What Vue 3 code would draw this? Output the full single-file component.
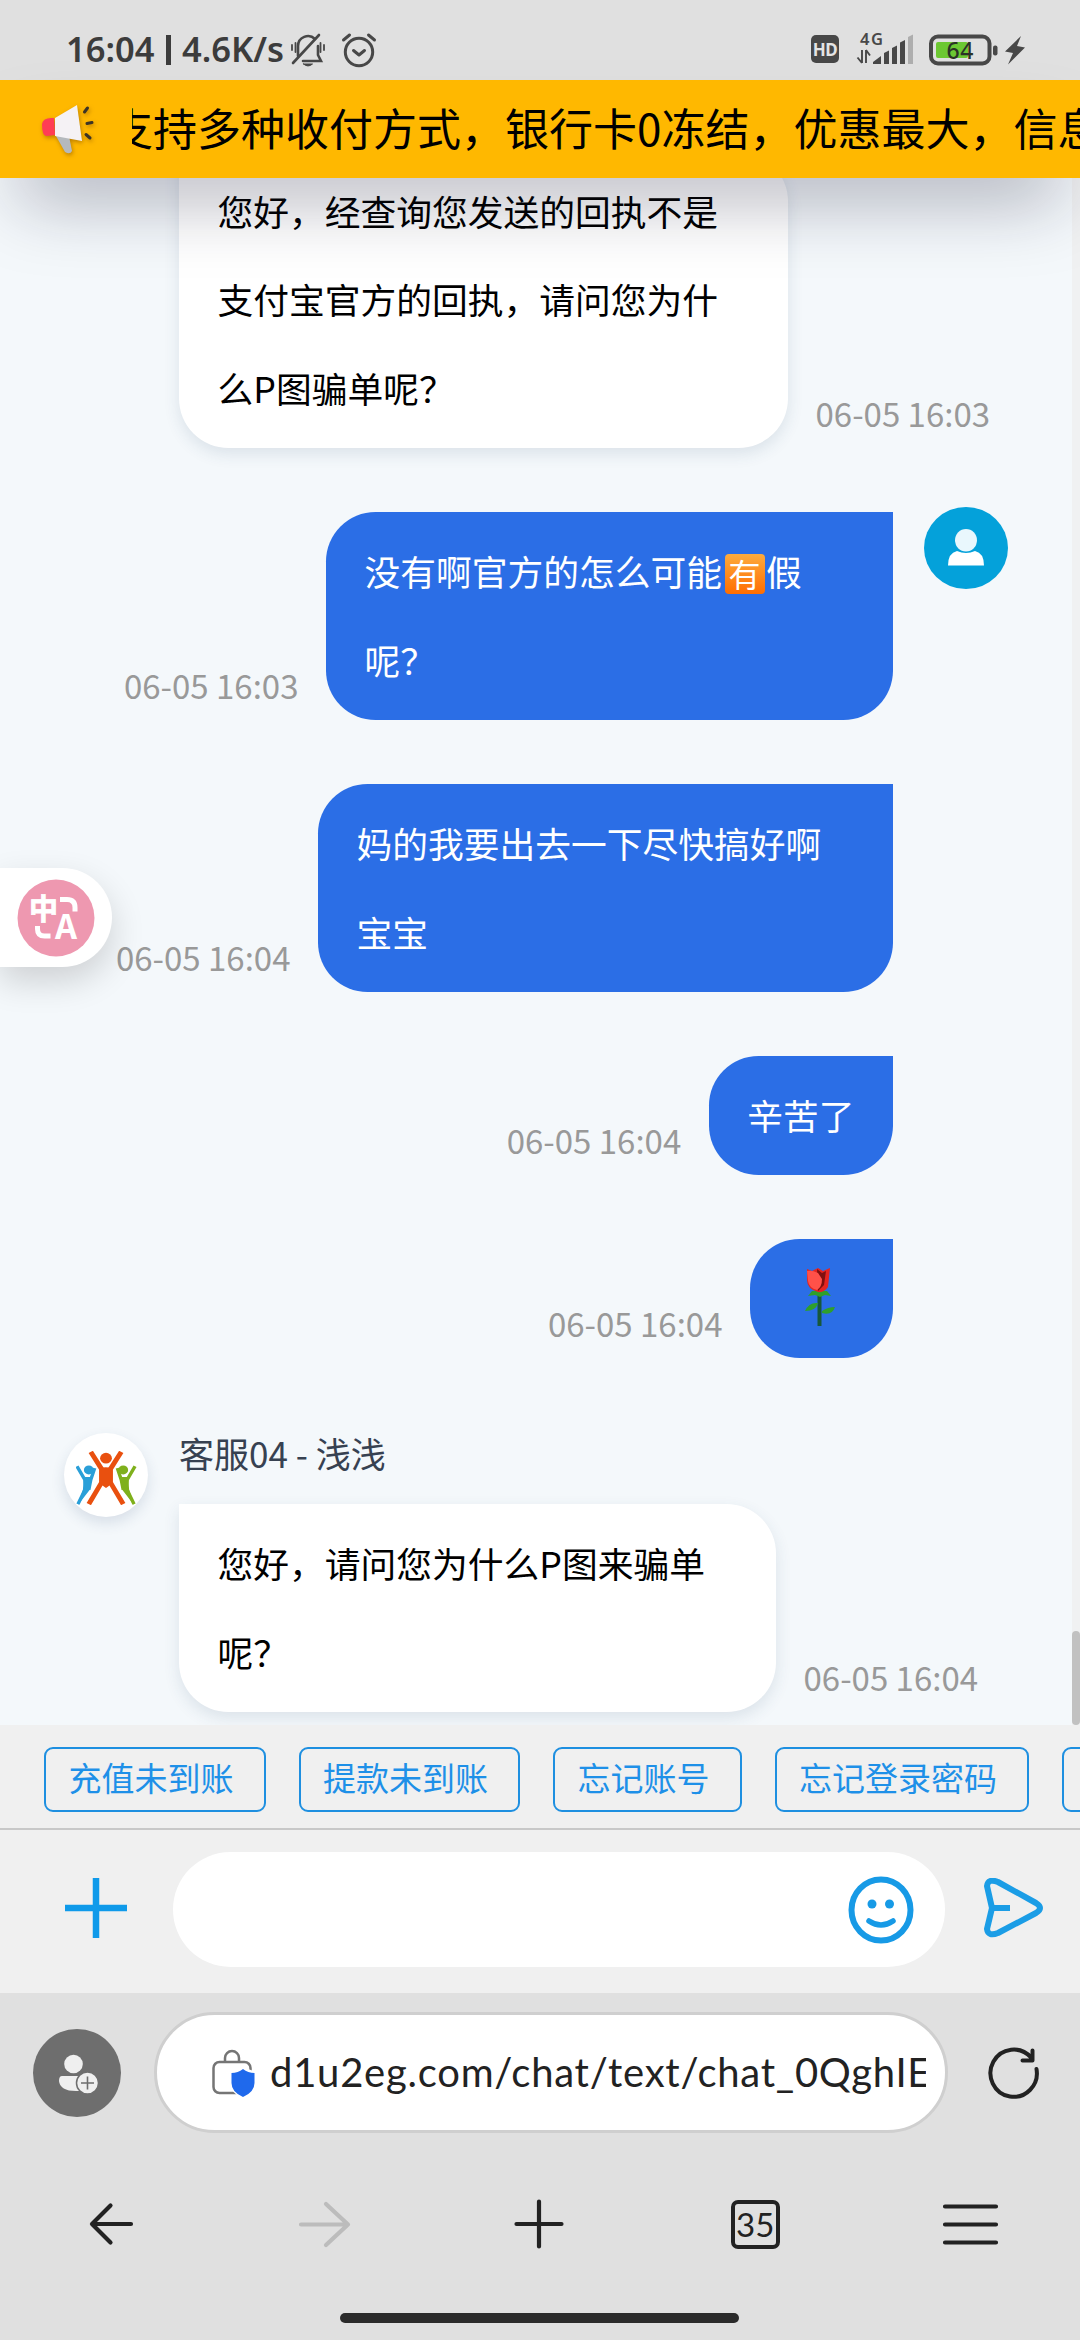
<script setup>
const quickReplies = ['充值未到账', '提款未到账', '忘记账号', '忘记登录密码', '忘记提款密码']
</script>

<template>
  <div class="screen">
    <header class="status">
      <span class="clock">16:04</span>
      <span class="bar"></span>
      <span class="speed">4.6K/s</span>
      <svg class="bell" width="36" height="36" viewBox="0 0 36 36" fill="none" stroke="#484848" stroke-width="2.6" stroke-linecap="round">
        <path d="M8 24V14a10 10 0 0 1 17-7M28 14v9l3 6H13" />
        <path d="M3 31L29 3" />
        <path d="M2 13v5M5.500 11v9M30.500 11v9M34 13v5" stroke-width="1.800" />
        <path d="M13.500 32h9q-4.500 4-9 0z" fill="#484848" stroke-width="1" />
      </svg>
      <svg class="alarm" width="36" height="36" viewBox="0 0 36 36" fill="none" stroke="#484848" stroke-width="3" stroke-linecap="round" stroke-linejoin="round">
        <circle cx="18" cy="20" r="13.700" />
        <path d="M12.500 18.500l5.500 4.500 5.500-4.500M2.500 8l6-5M33.500 8l-6-5" />
      </svg>
      <span class="hd">HD</span>
      <svg class="signal" width="58" height="34" viewBox="0 0 58 34">
        <text x="4" y="13.500" font-size="16.500" font-weight="600" fill="#484848" textLength="23">4G</text>
        <path d="M6 19v13M1.500 26.500L6 32M10 32V19M14 24.500L10 19" stroke="#484848" stroke-width="1.900" fill="none" />
        <path d="M17 31l8-6v8h-8zM28 22l5-2.500V33h-5zM36 17l5-2.500V33h-5zM44 11.500l5-2.500V33h-5z" fill="#484848" />
        <path d="M52 6l5-2.500V33h-5z" fill="#aeaeae" />
      </svg>
      <svg class="battery" width="70" height="32" viewBox="0 0 70 32">
        <rect x="2" y="2.500" width="58.500" height="27" rx="7" fill="none" stroke="#484848" stroke-width="4" />
        <rect x="7" y="8" width="32" height="16" rx="2" fill="#6cc832" />
        <rect x="64" y="11.500" width="4.500" height="10" rx="2" fill="#484848" />
        <text x="17.500" y="25" font-size="23" font-weight="500" fill="#2b3326" textLength="27">64</text>
      </svg>
      <svg class="bolt" width="20" height="30" viewBox="0 0 20 30"><path d="M16 1L0 16.500l8 1.500-5 11.500L20 12.500l-8-1.500z" fill="#484848" /></svg>
    </header>

    <div class="notice">
      <svg class="horn" width="54" height="50" viewBox="0 0 54 50">
        <path d="M15 32l9 16q5 3 7-1l-3-15z" fill="#b5b9bd" />
        <path d="M36 1l5 36-27-5V14z" fill="#f5f2f5" />
        <path d="M13 14q-11-1-12 6 0 13 5 12l8-1z" fill="#ff3d55" />
        <path d="M43.500 8l3-4M46 19.500l5-1M45 30.500l4 3.500" stroke="#3c3426" stroke-width="3" stroke-linecap="round" />
      </svg>
      <div class="marquee"><span>支持多种收付方式，银行卡0冻结，优惠最大，信息</span></div>
    </div>

    <main class="chat">
      <div class="row theirs first">
        <div class="bubble w609">您好，经查询您发送的回执不是<br />支付宝官方的回执，请问您为什<br />么P图骗单呢？</div>
        <time>06-05 16:03</time>
      </div>
      <div class="row mine">
        <time>06-05 16:03</time>
        <div class="bubble w567">没有啊官方的怎么可能<span class="you">有</span>假<br />呢？</div>
        <svg class="face" width="84" height="82" viewBox="0 0 84 84" preserveAspectRatio="none">
          <circle cx="42" cy="42" r="42" fill="#04a1da" />
          <ellipse cx="42" cy="34" rx="11" ry="11.500" fill="#e9f7fd" />
          <path d="M24 60q0-13 9-15 9 4 18 0 9 2 9 15z" fill="#fff" />
        </svg>
      </div>
      <div class="row mine">
        <time>06-05 16:04</time>
        <div class="bubble w575">妈的我要出去一下尽快搞好啊<br />宝宝</div>
      </div>
      <div class="row mine">
        <time>06-05 16:04</time>
        <div class="bubble">辛苦了</div>
      </div>
      <div class="row mine">
        <time>06-05 16:04</time>
        <div class="bubble rose">
          <svg width="32" height="60" viewBox="0 0 32 60">
            <path d="M15.500 24v34" stroke="#17583a" stroke-width="4" />
            <path d="M4 28l4-5h15l4 5-6-1-5 2-5-2zM1 43q4-9 13-8-2 8-13 8zM18 43q6-4 13-4-3 9-13 6z" fill="#2f9f2b" />
            <path d="M3 1l5 2 6-3 5 3 7-3-2 19q-4 6-10 5-11-3-11-12z" fill="#e52421" />
            <path d="M13 1l5 4 4-2-2 14-6 6z" fill="#80100f" />
            <path d="M3 3q5-1 11 2l4 6q0 8-5 11-8-2-9-9z" fill="#ff5149" />
          </svg>
        </div>
      </div>
      <div class="row theirs last">
        <div class="logo">
          <svg width="61" height="54" viewBox="0 0 62 60" preserveAspectRatio="none" fill="none" stroke-linejoin="round">
            <path d="M1 17l8 15 1 9L2 59M19 19l-4 13-2 11" stroke="#2a9fd8" stroke-width="3.500" />
            <path d="M8 29h8l-2 14L2 60l5-17z" fill="#2a9fd8" />
            <circle cx="13" cy="21" r="5" fill="#2a9fd8" />
            <path d="M60 17l-8 15-1 9 8 18M42 19l4 13 2 11" stroke="#7fb01c" stroke-width="3.500" />
            <path d="M53 29h-8l2 14 12 17-5-17z" fill="#7fb01c" />
            <circle cx="48" cy="21" r="5" fill="#7fb01c" />
            <path d="M15 1l11 19v15L13 59M46 1L35 20v15l13 24" stroke="#e9500f" stroke-width="5" />
            <path d="M24 19q6-2 13 0v17l-6.500 5-6.500-5z" fill="#e9500f" />
            <circle cx="30.500" cy="8" r="6" fill="#e9500f" />
          </svg>
        </div>
        <div class="stack">
          <div class="name">客服04 - 浅浅</div>
          <div class="line">
            <div class="bubble w597">您好，请问您为什么P图来骗单<br />呢？</div>
            <time>06-05 16:04</time>
          </div>
        </div>
      </div>
      <div class="track"><div class="thumb"></div></div>
      <div class="translate">
        <svg width="78" height="78" viewBox="0 0 78 78">
          <circle cx="39" cy="39" r="38.500" fill="#ee98b0" />
          <text class="zh" x="12" y="41" font-size="29" fill="#fff" stroke="#fff" stroke-width="0.800">中</text>
          <text class="en" x="38" y="60" font-size="34" fill="#fff" textLength="22" lengthAdjust="spacingAndGlyphs">A</text>
          <path d="M43 20.500h7q8 0 8 8v4M20.500 47v3q0 7 7 7h6" fill="none" stroke="#fff" stroke-width="5" />
        </svg>
      </div>
    </main>

    <div class="quick">
      <button v-for="q in quickReplies" :key="q">{{ q }}</button>
    </div>

    <div class="composer">
      <svg class="add" width="62" height="60" viewBox="0 0 62 60"><path d="M31 0v60M0 30h62" stroke="#0f9aea" stroke-width="6.500" /></svg>
      <div class="field">
        <svg width="66" height="68" viewBox="0 0 66 68" fill="none" stroke="#179ae6" stroke-width="6" stroke-linecap="round">
          <ellipse cx="33" cy="34" rx="29.500" ry="30.500" />
          <path d="M21 45q12 8 24 0" stroke-width="5.500" />
          <circle cx="24" cy="28" r="4.500" fill="#179ae6" stroke="none" /><circle cx="41.500" cy="28" r="4.500" fill="#179ae6" stroke="none" />
        </svg>
      </div>
      <svg class="send" width="60" height="60" viewBox="0 0 60 60" fill="none" stroke="#1b9de6" stroke-width="6" stroke-linejoin="round">
        <path d="M3 8Q4 0 14 4L52 25q8 5 0 10L14 55Q4 59 3 51L8 30zM8 30h18" />
      </svg>
    </div>

    <footer class="browser">
      <div class="address">
        <svg class="account" width="88" height="88" viewBox="0 0 88 88">
          <circle cx="44" cy="44" r="44" fill="#6e6e6e" />
          <circle cx="40.500" cy="35" r="9.300" fill="#efefef" />
          <path d="M29 47h25v15H43q-16 0-17-10 0-5 3-5z" fill="#efefef" />
          <circle cx="54.500" cy="54" r="11" fill="#efefef" stroke="#6e6e6e" stroke-width="1.500" />
          <path d="M48 54h13M54.500 47.500v13" stroke="#6e6e6e" stroke-width="1.600" />
        </svg>
        <div class="url">
          <svg class="lock" width="44" height="48" viewBox="0 0 44 48" fill="none">
            <rect x="1.500" y="13" width="37" height="31" rx="6" stroke="#757575" stroke-width="2.500" />
            <path d="M13 13V9a7 7 0 0 1 14 0v4" stroke="#757575" stroke-width="2.500" />
            <path d="M31 18l13 5v13q-2 9-13 13-11-4-13-13V23z" fill="#fff" />
            <path d="M31 20q5 4 11.500 4v10q0 9-11.500 14-11.500-5-11.500-14V24Q26 24 31 20z" fill="#1f69ec" />
          </svg>
          <span class="href">d1u2eg.com/chat/text/chat_0QghIE</span>
        </div>
        <svg class="reload" width="52" height="52" viewBox="0 0 52 52" fill="none" stroke="#222" stroke-width="4" stroke-linecap="round" stroke-linejoin="round">
          <path d="M48.500 22A23.200 23.600 0 1 1 43 10.500M44.500 3.500v10h-10" />
        </svg>
      </div>
      <nav class="tools">
        <svg width="60" height="60" viewBox="0 0 60 60"><path d="M51 30H12M30.500 11.500L12 30l18.500 18.500" /></svg>
        <svg class="off" width="60" height="60" viewBox="0 0 60 60"><path d="M6 30.500h47M31 10l22 20.500L31 51" /></svg>
        <svg width="60" height="60" viewBox="0 0 60 60"><path d="M5.500 30h45M28 7.500v45" /></svg>
        <span class="tabs"><b>35</b></span>
        <svg width="60" height="60" viewBox="0 0 60 60"><path d="M5 12.500h51M5 30.500h51M5 48.500h51" /></svg>
      </nav>
      <div class="pill"></div>
    </footer>
  </div>
</template>

<style>
body { margin: 0; }
</style>

<style scoped>
.screen {
  width: 1080px; height: 2340px; overflow: hidden; display: flex; flex-direction: column;
  background: #e0e0e0; font-family: "Noto Sans CJK SC", "Noto Sans", sans-serif;
}
svg { flex: none; display: block; }
.status { height: 80px; flex: none; display: flex; align-items: flex-start; box-sizing: border-box; padding: 31px 0 0 66px; font-family: "Noto Sans", sans-serif; color: #3c3c3c; }
.clock, .speed { font-size: 34.500px; font-weight: 600; line-height: 36px; height: 38px; white-space: nowrap; flex: none; }
.clock { width: 100px; }
.bar { width: 5px; height: 30px; background: #3c3c3c; margin: 4px 11px 0 0; flex: none; }
.speed { width: 108px; }
.bell { margin-top: 1px; }
.alarm { margin: 1px 0 0 15px; }
.hd { width: 28px; height: 28px; margin: 4px 17px 0 434px; border-radius: 5px; background: #484848; color: #e4e4e4; font-size: 17px; line-height: 29px; font-weight: 700; text-align: center; letter-spacing: -0.5px; flex: none; }
.battery { margin: 3px 0 0 15px; }
.bolt { margin: 4px 0 0 6px; }

.notice { position: relative; z-index: 2; height: 98px; flex: none; display: flex; align-items: center; background: #ffb800; box-shadow: 0 40px 72px -20px rgba(20, 20, 50, 0.35); }
.horn { margin: 0 37px 0 41px; filter: drop-shadow(1px 2px 2px rgba(120, 70, 0, 0.5)); }
.marquee { flex: 1; overflow: hidden; white-space: nowrap; font-size: 44px; line-height: 64px; color: #000; }
.marquee span { display: block; margin: -2px 0 2px -23px; }

.chat { position: relative; height: 1547px; flex: none; overflow: hidden; background: #f4f8fb; font-size: 35.75px; }
.row { display: flex; align-items: flex-end; margin-top: 64px; }
.bubble { box-sizing: border-box; padding: 14.800px 38.500px 15.800px; line-height: 88.600px; border-radius: 49.500px; white-space: nowrap; flex: none; color: #000; }
.theirs .bubble { background: #fff; border-top-left-radius: 0; box-shadow: 0 6px 16px rgba(40, 70, 110, 0.12); }
.mine { position: relative; justify-content: flex-end; padding-right: 187px; }
.mine .bubble { background: #2b6ee6; color: #fff; border-top-right-radius: 0; }
time { font-size: 33px; line-height: 48px; color: #999; margin: 0 27.500px 11px; white-space: nowrap; }
.first { margin-top: -26px; padding-left: 179px; }
.w609 { width: 609px; }
.w567 { width: 567px; }
.w575 { width: 575px; }
.w597 { width: 597px; }
.you { display: inline-block; width: 40px; height: 40px; margin: 0 1.500px 0 2.500px; border-radius: 4px; background: linear-gradient(#fdab3d, #ff6d00); font-size: 32px; line-height: 38px; text-align: center; position: relative; top: -6px; vertical-align: -7px; }
.face { position: absolute; left: 924px; top: -5px; }
.rose { width: 143px; height: 119px; display: flex; align-items: center; justify-content: center; }
.rose svg { margin-right: 4px; }
.last { align-items: flex-start; margin-top: 75px; padding-left: 64px; }
.logo { width: 84px; height: 84px; border-radius: 50%; background: #fff; display: flex; align-items: center; justify-content: center; box-shadow: 0 6px 14px rgba(40, 70, 110, 0.14); margin-right: 31px; }
.logo svg { margin-top: 5px; }
.name { font-size: 35px; line-height: 40px; height: 71px; color: #374151; }
.line { display: flex; align-items: flex-end; }
.track { position: absolute; right: 0; top: 0; bottom: 0; width: 8px; background: #f0f1f2; display: flex; align-items: flex-end; }
.thumb { width: 8px; height: 94px; border-radius: 4px; background: #c1c1c1; }
.translate { position: absolute; left: 0; top: 690px; width: 95px; height: 99px; padding-left: 17px; display: flex; align-items: center; background: #fff; border-radius: 0 50px 50px 0; box-shadow: 0 14px 34px rgba(0, 0, 0, 0.16); }
.zh, .en { font-weight: 700; }

.quick { height: 103px; flex: none; display: flex; gap: 33px; padding: 22px 0 0 44px; box-sizing: border-box; background: #f0f0f0; overflow: hidden; }
.quick button { flex: none; height: 65px; box-sizing: border-box; padding: 0 30px 0 22.500px; border: 2px solid #1e8fe0; border-radius: 9px; background: none; color: #1e90e8; font: 33px/56px "Noto Sans CJK SC", sans-serif; display: flex; }
.composer { height: 165px; flex: none; box-sizing: border-box; border-top: 2px solid #c8c8c8; background: #f0f0f0; display: flex; align-items: flex-start; }
.add { margin: 48px 46px 0 65px; }
.field { width: 772px; height: 115px; margin-top: 22px; border-radius: 58px; background: #fff; display: flex; align-items: center; justify-content: flex-end; padding-right: 31px; box-sizing: border-box; }
.send { margin: 48px 0 0 39px; }

.browser { height: 347px; flex: none; display: flex; flex-direction: column; color: #222; }
.address { display: flex; align-items: center; padding: 19px 0 0 33px; }
.url { width: 794px; height: 121px; box-sizing: border-box; margin: 0 40px 0 33px; border: 3px solid #cfcfcf; border-radius: 61px; background: #fff; display: flex; align-items: center; padding-left: 55px; }
.href { margin: 0 0 2px 14px; width: 656px; overflow: hidden; white-space: nowrap; font: 40px/56px Lato, sans-serif; letter-spacing: 0.750px; color: #222; }
.tools { display: flex; justify-content: space-between; padding: 61px 80px 0; height: 60px; align-items: center; }
.tools svg { fill: none; stroke: #222; stroke-width: 4.200; stroke-linecap: round; stroke-linejoin: round; }
.tools .off { stroke: #bcbcbc; }
.tabs { width: 49px; height: 49px; box-sizing: border-box; border: 4px solid #222; border-radius: 7px; margin: 0 5px; display: flex; align-items: center; justify-content: center; }
.tabs b { font: 400 33px/40px Lato, sans-serif; }
.pill { width: 399px; height: 10px; border-radius: 5px; background: #2b2b2b; margin: 59px 0 0 340px; }
</style>
